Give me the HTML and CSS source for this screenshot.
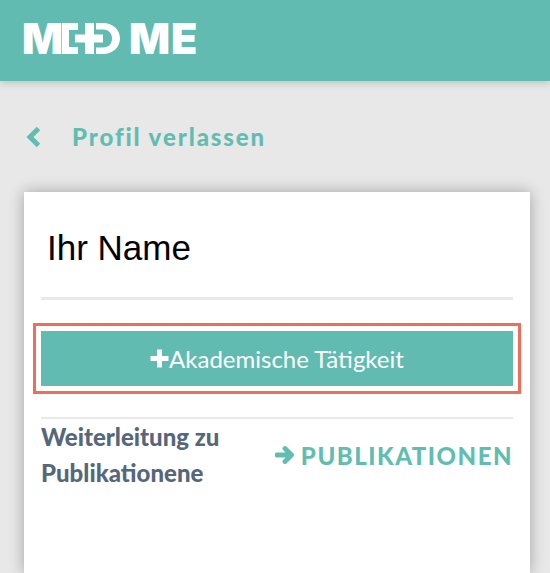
FILE: index.html
```html
<!DOCTYPE html>
<html lang="de">
<head>
<meta charset="utf-8">
<title>Profil</title>
<link rel="stylesheet" href="styles.css">
</head>
<body>
<header class="topbar">
  <div class="logo">
    <span class="logo-m">M</span>
    <svg class="logo-mark" width="58" height="31" viewBox="0 0 58 31" aria-hidden="true">
      <path d="M0 0H16V7H7V24H16V31H0Z" fill="#fff"/>
      <path d="M23 0H32V11.500H41V19.500H32V31H23V19.500H13V11.500H23Z" fill="#fff"/>
      <path d="M34 0H41C51 0 58 7 58 15.500C58 24 51 31 41 31H34V24.500H41C47 24.500 50 20.500 50 15.500C50 10.500 47 6.500 41 6.500H34Z" fill="#fff"/>
    </svg>
    <span class="logo-me">ME</span>
  </div>
</header>
<main class="page">
  <a class="back">
    <svg class="back-icon" width="16" height="22" viewBox="0 0 16 22" aria-hidden="true">
      <path d="M12.500 2.500L4 11L12.500 19.500" fill="none" stroke="#62bdb1" stroke-width="5"/>
    </svg>
    <span class="back-text">Profil verlassen</span>
  </a>
  <section class="card">
    <h1 class="name">Ihr Name</h1>
    <hr class="rule-thick">
    <button class="add-btn">
      <svg class="plus" width="19" height="19" viewBox="0 0 19 19" aria-hidden="true">
        <path d="M7 0.500H12V7H18.500V12H12V18.500H7V12H0.500V7H7Z" fill="#fff"/>
      </svg>Akademische Tätigkeit
    </button>
    <hr class="rule-thin">
    <div class="pub-row">
      <p class="pub-label">Weiterleitung zu<br>Publikationene</p>
      <a class="pub-link">
        <svg class="arrow" width="20" height="20" viewBox="0 0 20 20" aria-hidden="true">
          <path d="M2 10H16M10 3.500L16.500 10L10 16.500" fill="none" stroke="#62bdb1" stroke-width="4.800" stroke-linecap="round" stroke-linejoin="round"/>
        </svg>
        <span>PUBLIKATIONEN</span>
      </a>
    </div>
  </section>
</main>
</body>
</html>
```
FILE: styles.css
```css
* { box-sizing: border-box; }
html, body { margin: 0; padding: 0; height: 100%; overflow: hidden; }
body { background: #e8e8e8; font-family: Lato, "Liberation Sans", sans-serif; }

.topbar {
  height: 81px;
  background: #62bbb1;
  box-shadow: 0 2px 8px rgba(0, 0, 0, 0.18);
  padding: 23px 0 0 22px;
}
.logo {
  display: flex;
  align-items: center;
  height: 31px;
  color: #fff;
  font-family: Inter, Lato, sans-serif;
  font-weight: 900;
  font-size: 43px;
  line-height: 31px;
}
.logo-m { width: 40px; }
.logo-mark { margin-right: 9px; flex: none; }
.logo-me { letter-spacing: 1px; }

.page { padding: 0 20px 0 24px; }
.back {
  display: flex;
  align-items: center;
  height: 111px;
  padding-left: 2px;
  gap: 30px;
}
.back-icon { flex: none; }
.back-text {
  color: #62bdb1;
  font-weight: 900;
  font-size: 24px;
  letter-spacing: 1.900px;
}
.card {
  width: 506px;
  height: 381px;
  background: #fff;
  box-shadow: 0 0 14px rgba(0, 0, 0, 0.3);
  padding: 0 17px;
}
.name {
  margin: 0;
  height: 105px;
  padding: 35px 0 0 6px;
  font-family: "Liberation Sans", Arial, sans-serif;
  font-weight: 400;
  font-size: 35px;
  line-height: 42px;
  color: #000;
}
.rule-thick {
  margin: 0;
  border: 0;
  height: 3px;
  background: #e9e9e9;
}
.add-btn {
  display: flex;
  align-items: center;
  justify-content: center;
  width: 100%;
  height: 55px;
  margin-top: 31px;
  border: 0;
  padding: 0;
  background: #62bbb1;
  color: #fff;
  font-family: Lato, sans-serif;
  font-size: 24px;
  outline: 3.500px solid #ee6e5c;
  outline-offset: 5px;
}
.plus { flex: none; }
.rule-thin {
  margin: 31px 0 0;
  border: 0;
  height: 2px;
  background: #e9e9e9;
}
.pub-row {
  display: flex;
  justify-content: space-between;
  align-items: center;
}
.pub-label {
  margin: 0;
  color: #56677a;
  font-weight: 900;
  font-size: 24px;
  line-height: 36px;
}
.pub-link {
  display: flex;
  align-items: center;
  gap: 6px;
  color: #62bdb1;
  font-weight: 900;
  font-size: 24px;
  letter-spacing: 1.500px;
}
.arrow { flex: none; }
```
